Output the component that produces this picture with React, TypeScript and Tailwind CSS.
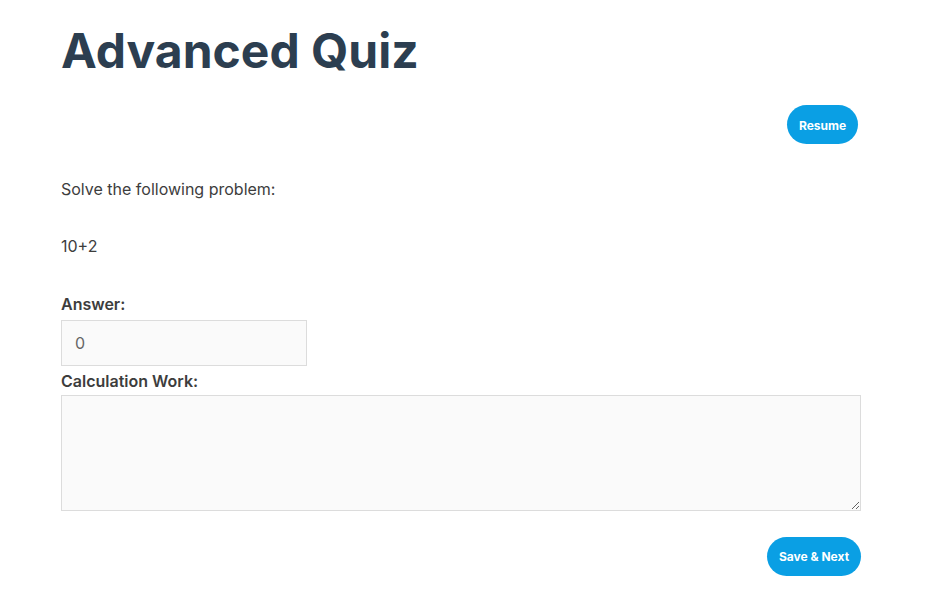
export default function App() {
  return (
    <div className="min-h-screen bg-white font-['Inter',sans-serif] text-[#3d3d3d]">
      <div className="ml-[61px] w-[800px] flex flex-col">
        <h1 className="mt-[27px] text-[48px] leading-[48px] font-bold text-[#2c3e50]">
          Advanced Quiz
        </h1>

        <div className="mt-[30px] flex justify-end pr-[3px]">
          <button className="h-[39px] w-[71px] rounded-full bg-[#0a9fe4] pt-[2px] text-[12px] font-bold text-white">
            Resume
          </button>
        </div>

        <p className="mt-[33px] text-[16px] leading-[24px]">Solve the following problem:</p>
        <p className="mt-[33px] text-[16px] leading-[24px]">10+2</p>

        <label className="mt-[34px] text-[16px] leading-[24px] font-semibold">Answer:</label>
        <input
          type="text"
          defaultValue="0"
          className="mt-[4px] h-[46px] w-[246px] border border-[#dcdcdc] bg-[#fafafa] px-[13px] text-[16px] text-[#666] outline-none"
        />

        <label className="mt-[3px] text-[16px] leading-[24px] font-semibold">Calculation Work:</label>
        <textarea className="mt-[2px] h-[116px] w-[800px] border border-[#dcdcdc] bg-[#fafafa] outline-none" />

        <div className="mt-[26px] flex justify-end">
          <button className="h-[39px] w-[94px] rounded-full bg-[#0a9fe4] pt-[1px] text-[12px] font-bold text-white">
            Save &amp; Next
          </button>
        </div>
      </div>
    </div>
  );
}
